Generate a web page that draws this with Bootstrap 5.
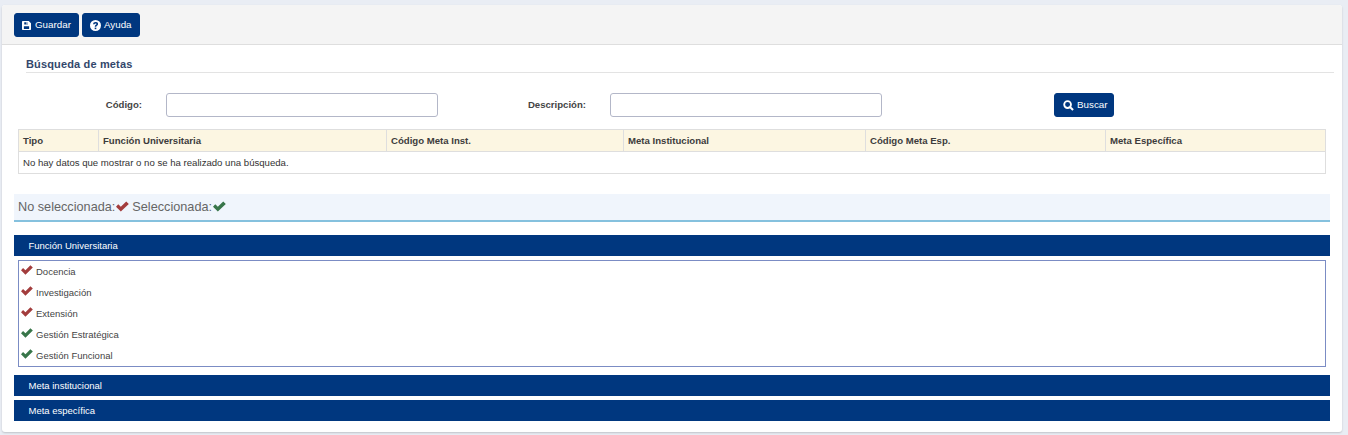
<!DOCTYPE html>
<html lang="es"><head><meta charset="utf-8"><title>Búsqueda de metas</title>
<link href="https://cdn.jsdelivr.net/npm/bootstrap@5.3.0/dist/css/bootstrap.min.css" rel="stylesheet">
<style>
html,body{height:435px;overflow:hidden}
body{background:#e9edf4;font-family:"Liberation Sans",Arial,sans-serif;font-size:10px;color:#333;padding:5px 6px 3px 2px}
.shell{height:427px;background:#fff;border:0;border-radius:3px;box-shadow:0 1px 2px rgba(0,0,0,.18);overflow:hidden}
.topbar{height:40px;background:#f4f4f4;border-bottom:1px solid #dedede;padding:8px 12px;gap:3px}
.navy-btn{background:#00377f;border:1px solid #00377f;color:#fff;font-size:9.8px;line-height:1;height:24px;padding:0 7px;border-radius:3px;gap:4px}
.navy-btn:hover{background:#00377f;color:#fff}
.gap-tight{gap:3px}
.sect-title{margin:0 8px 0 24px;height:28px;padding:12px 0 0;border-bottom:1px solid #e3e3e3;font-size:11px;font-weight:700;color:#33476b;letter-spacing:.15px;line-height:14px}
.search-row{margin-top:20px;height:24px}
.lbl{font-weight:700;font-size:9.6px;color:#444;text-align:right}
.lbl-a{width:140px}.lbl-b{width:100px;margin-left:48px}
.fld{width:272px;height:24px;margin-left:24px;border:1px solid #b3b7c8;border-radius:3px;padding:0 6px;font-size:10px;background:#fff}
.fld:focus{outline:0}
.btn-slot{margin-left:172px}
.btn-slot .navy-btn{width:60px;padding:0 0 0 8px}
.res-table{margin:12px 0 0 16px;width:1308px;table-layout:fixed;border-collapse:collapse;font-size:9.6px}
.res-table th,.res-table td{border:1px solid #dedede;padding:0 4px;vertical-align:middle;line-height:12px;height:22px}
.res-table th{background:#fcf6e2;color:#3c3c3c;font-weight:700}
.res-table td{font-size:9.6px;color:#333;background:#fff}
.legend-bar{margin:20px 12px 0;height:28px;background:#f0f5fc;border-bottom:2px solid #85c1de;padding-left:4px;font-size:12.7px;color:#666;line-height:26px}
.legend-bar svg{margin:0 3px 0 1px;vertical-align:-1px}
.pane-head{margin:0 12px;height:21px;background:#00377f;color:#fff;font-size:9.5px;line-height:21px;padding-left:14.5px}
.pane-a{margin-top:13px}
.pane-list{margin:4px 16px 8px;height:107px;border:1px solid #7b8cc4;list-style:none;padding:0 2px}
.pane-list li{height:21px;font-size:9.5px;color:#444;line-height:21px;gap:3px}
.pane-list svg{margin-top:-3px;flex:none}
.pane-b{margin-bottom:4px}
</style></head>
<body>
<svg width="0" height="0" class="d-none" aria-hidden="true"><defs>
<path id="tick" d="M0 5.8 2.4 3.2 5.2 5.9 11 0 13.8 2.7 5.2 11Z"/>
</defs></svg>
<main class="shell">
<div class="topbar d-flex align-items-start">
<button type="button" class="navy-btn btn d-inline-flex align-items-center">
<svg width="9" height="9" viewBox="0 0 12 12" aria-hidden="true"><path fill="#fff" fill-rule="evenodd" d="M1 0H9L12 3V11a1 1 0 0 1-1 1H1a1 1 0 0 1-1-1V1A1 1 0 0 1 1 0ZM3 1.5V4.5H8V1.5ZM6 1.8H7.5V4.2H6ZM2.5 7V10.5H9.5V7Z"/></svg>Guardar</button>
<button type="button" class="navy-btn gap-tight btn d-inline-flex align-items-center">
<svg width="11" height="11" viewBox="0 0 12 12" aria-hidden="true"><circle cx="6" cy="6" r="6" fill="#fff"/><path fill="none" stroke="#00377f" stroke-width="1.7" d="M4.1 4.6C4.2 2.4 8 2.4 8 4.4 8 5.7 6 5.7 6 7.4"/><rect x="5.1" y="8.3" width="1.8" height="1.7" fill="#00377f"/></svg>Ayuda</button>
</div>
<h2 class="sect-title">Búsqueda de metas</h2>
<form class="search-row d-flex align-items-center" onsubmit="return false">
<label class="lbl lbl-a" for="fa">Código:</label><input id="fa" class="fld" type="text">
<label class="lbl lbl-b" for="fb">Descripción:</label><input id="fb" class="fld" type="text">
<div class="btn-slot"><button type="button" class="navy-btn gap-tight btn d-inline-flex align-items-center">
<svg width="11" height="11" viewBox="0 0 12 12" aria-hidden="true"><circle cx="5" cy="5" r="3.7" fill="none" stroke="#fff" stroke-width="2"/><path stroke="#fff" stroke-width="2.2" d="M7.6 7.6 11 11"/></svg>Buscar</button></div>
</form>
<table class="res-table">
<colgroup><col style="width:80px"><col style="width:288px"><col style="width:237px"><col style="width:242px"><col style="width:240px"><col></colgroup>
<thead><tr><th>Tipo</th><th>Función Universitaria</th><th>Código Meta Inst.</th><th>Meta Institucional</th><th>Código Meta Esp.</th><th>Meta Específica</th></tr></thead>
<tbody><tr><td colspan="6">No hay datos que mostrar o no se ha realizado una búsqueda.</td></tr></tbody>
</table>
<div class="legend-bar">No seleccionada:<svg width="13" height="11" viewBox="0 0 14 11" fill="#a33d3d" aria-hidden="true"><use href="#tick"/></svg>Seleccionada:<svg width="13" height="11" viewBox="0 0 14 11" fill="#38764a" aria-hidden="true"><use href="#tick"/></svg></div>
<div class="pane-head pane-a">Función Universitaria</div>
<ul class="pane-list">
<li class="d-flex align-items-center"><svg width="12" height="10" viewBox="0 0 14 11" fill="#a33d3d" aria-hidden="true"><use href="#tick"/></svg>Docencia</li>
<li class="d-flex align-items-center"><svg width="12" height="10" viewBox="0 0 14 11" fill="#a33d3d" aria-hidden="true"><use href="#tick"/></svg>Investigación</li>
<li class="d-flex align-items-center"><svg width="12" height="10" viewBox="0 0 14 11" fill="#a33d3d" aria-hidden="true"><use href="#tick"/></svg>Extensión</li>
<li class="d-flex align-items-center"><svg width="12" height="10" viewBox="0 0 14 11" fill="#38764a" aria-hidden="true"><use href="#tick"/></svg>Gestión Estratégica</li>
<li class="d-flex align-items-center"><svg width="12" height="10" viewBox="0 0 14 11" fill="#38764a" aria-hidden="true"><use href="#tick"/></svg>Gestión Funcional</li>
</ul>
<div class="pane-head pane-b">Meta institucional</div>
<div class="pane-head">Meta específica</div>
</main>
<script src="https://cdn.jsdelivr.net/npm/bootstrap@5.3.0/dist/js/bootstrap.bundle.min.js"></script>
</body></html>
